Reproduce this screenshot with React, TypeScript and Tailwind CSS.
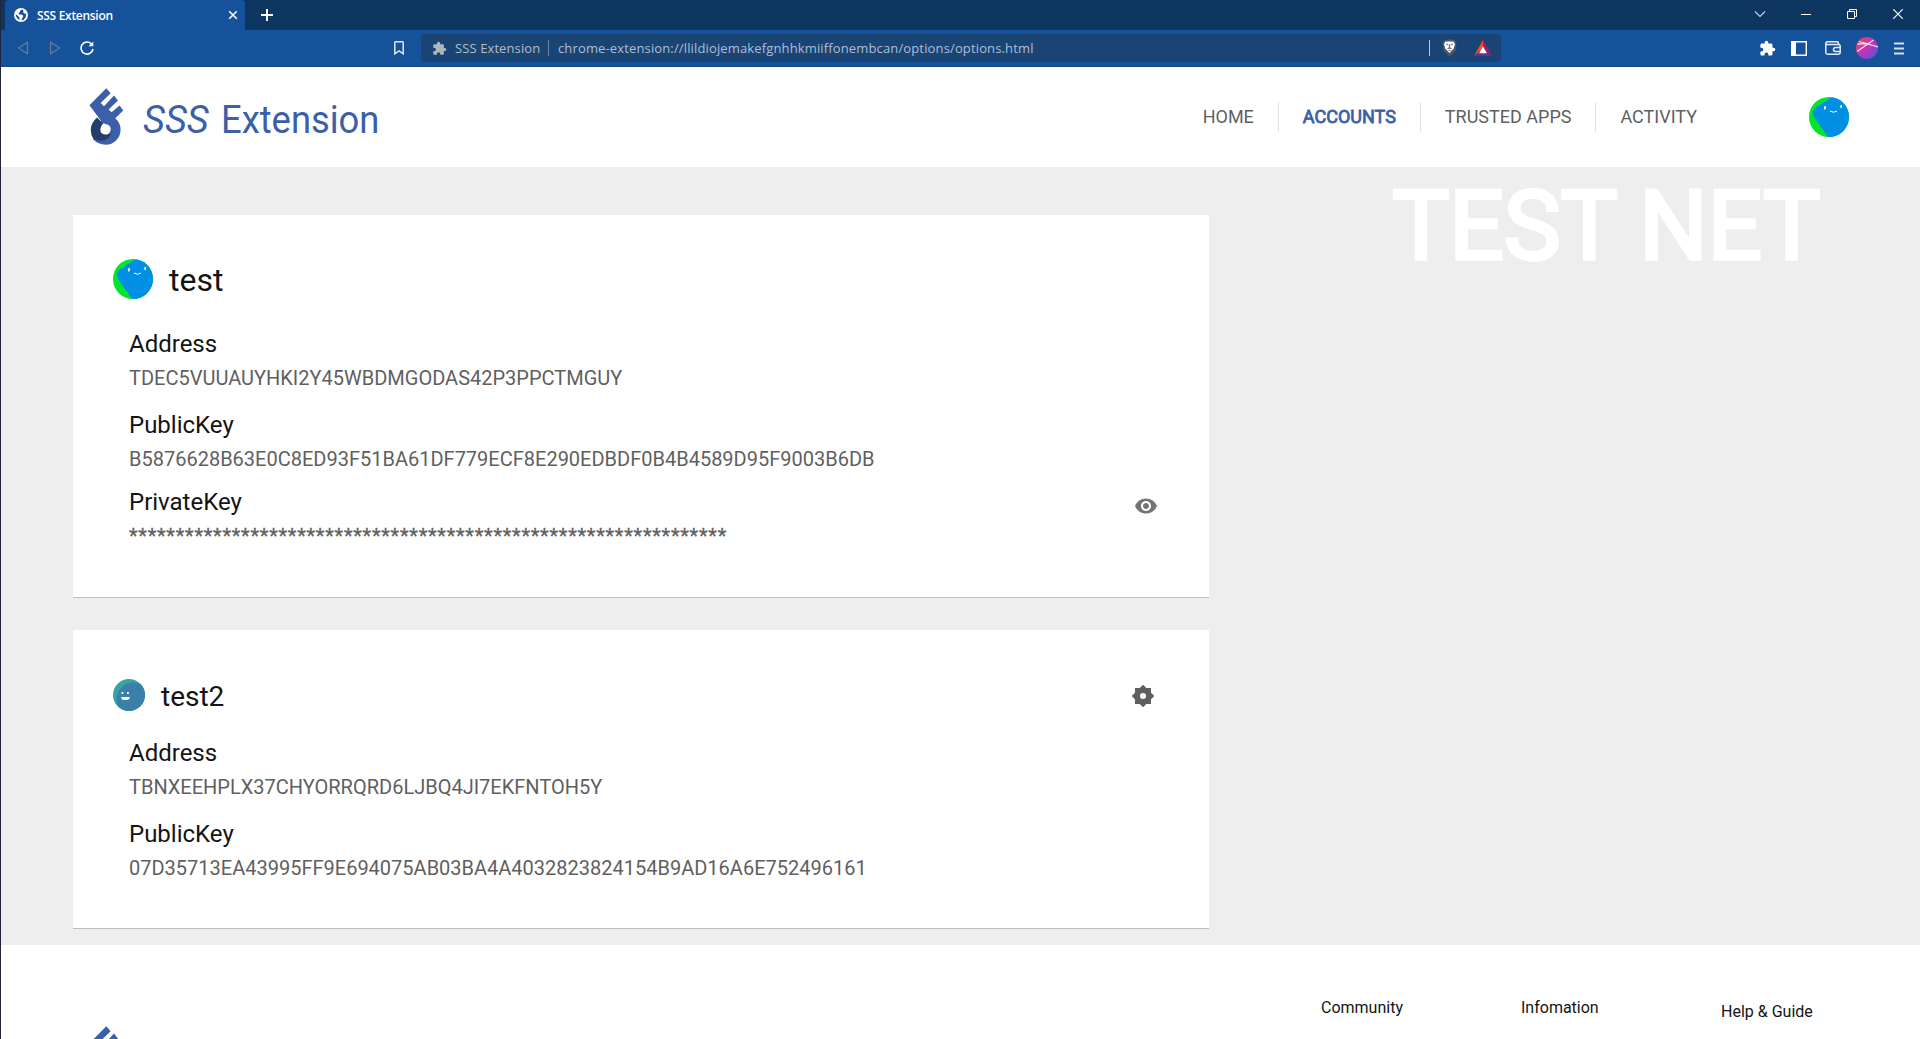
import React from "react";
import { MdExtension, MdVisibility } from "react-icons/md";

function SssMark({ className = "" }: { className?: string }) {
  return (
    <svg viewBox="268 263 105 172" className={`h-[57px] w-[35px] shrink-0 ${className}`}>
      <path
        fill="#3b5fa9"
        d="M269 315 L320 264 L333 279 L303 308 L313 318 L343 286 L355 301 L327 328 L336 336 L360 316 L371 331 L347 354 Q363 368 363 390 A45 45 0 0 1 318 434 Q295 434 280 418 L300 400 L304 362 Z"
      />
      <path
        fill="#263d6b"
        d="M292 352 Q273 368 273 390 Q273 406 281 417 Q290 423 303 422 Q326 421 335 400 L318 404 L302 390 Q302 378 311 371 Z"
      />
      <path d="M302 388 Q303 376 311 369 L322 373 A15.500 15.500 0 1 1 302 388 Z" fill="#fff" />
    </svg>
  );
}

function BlobAvatar() {
  return (
    <svg viewBox="0 0 40 40" className="size-10 shrink-0 rounded-full">
      <rect width="40" height="40" fill="#00e62f" />
      <path d="M23 0 L7 10 Q2 14 5 20 L19 40 H40 V0 Z" fill="#008fe3" />
      <path d="M15 9.2h2v2l-1 1.2h-1zM31 9l1-1h1v3h-1.4z" fill="#fff" />
      <path d="M21 14 Q24.500 16.500 28 14" fill="none" stroke="#fff" strokeWidth="1" />
    </svg>
  );
}

function SmileAvatar() {
  return (
    <svg viewBox="0 0 32 32" className="size-8 shrink-0 rounded-full">
      <rect width="32" height="32" fill="#38a3a5" />
      <circle cx="20.500" cy="20.500" r="17" fill="#3a80a9" />
      <path d="M8.500 13h1.800v2h-1.800zM14 13h1.800v2h-1.800zM8 18h9q-.5 3-3 3h-3q-2.500 0-3-3z" fill="#fff" />
    </svg>
  );
}

function TabStrip() {
  return (
    <div className="flex h-[30px] items-center bg-[#0c3560] pl-1 text-white">
      <div className="flex h-full w-[240px] items-center rounded-t-[4px] bg-[#155299] pr-[7px] pl-[9px]">
        <svg viewBox="0 0 14 14" className="size-[14px]">
          <circle cx="7" cy="7" r="7" fill="#fff" />
          <path
            fill="#155299"
            d="M8.200 1.500 Q5.500 2.200 6 4 L4.500 5 L5 6.500 L7.500 6.500 Q9.500 7 9.200 8.500 Q8 10 7.500 12.300 Q10 12.300 11.600 9.500 L12.300 6 L10.500 5.500 L9 4.500 L9.600 3 Z M1.600 6 L4.500 8.500 L5.500 10 L5.500 12 Q2 10.500 1.600 6Z"
          />
        </svg>
        <span className="ml-[9px] flex-1 pt-[2px] text-[12px] font-semibold tracking-[-0.3px]">SSS Extension</span>
        <svg viewBox="0 0 10 10" className="size-[10px]">
          <path d="M1.200 1.200 8.800 8.800M8.800 1.200 1.200 8.800" stroke="#fff" strokeWidth="1.500" />
        </svg>
      </div>
      <svg viewBox="0 0 12 12" className="ml-4 size-3">
        <path d="M6 0v12M0 6h12" stroke="#fff" strokeWidth="2" />
      </svg>
      <div className="ml-auto flex items-center pr-[17px] pb-[2px]">
        <svg viewBox="0 0 12 8" className="h-2 w-3">
          <path d="M1 1.500 6 6.500 11 1.500" fill="none" stroke="#c3cfdc" strokeWidth="1.200" />
        </svg>
        <svg viewBox="0 0 10 10" className="ml-[35px] size-[10px]">
          <path d="M0 5.500h10" stroke="#fff" />
        </svg>
        <svg viewBox="0 0 10 10" className="ml-[36px] size-[10px]">
          <path d="M.5 2.500h7v7h-7zM2.500 2.500v-2h7v7h-2" fill="none" stroke="#fff" />
        </svg>
        <svg viewBox="0 0 10 10" className="ml-[36px] size-[10px]">
          <path d="M.3.3 9.700 9.700M9.700.3.3 9.700" stroke="#fff" strokeWidth="1.200" />
        </svg>
      </div>
    </div>
  );
}

function Toolbar() {
  return (
    <div className="flex h-[37px] items-center border-b border-[#0f4a8c] bg-[#155299] pl-4">
      <svg viewBox="0 0 12 14" className="h-[14px] w-3">
        <path d="M10.500 1.200v11.600L1.500 7z" fill="none" stroke="#64789a" strokeWidth="1.400" strokeLinejoin="round" />
      </svg>
      <svg viewBox="0 0 12 14" className="ml-5 h-[14px] w-3">
        <path d="M1.500 1.200v11.600L10.500 7z" fill="none" stroke="#64789a" strokeWidth="1.400" strokeLinejoin="round" />
      </svg>
      <svg viewBox="0 0 14 14" className="ml-[19px] size-[14px]">
        <path d="M11.500 3A6 6 0 1 0 13 8" fill="none" stroke="#fff" strokeWidth="1.600" />
        <path d="M8.500 5.200h4.800V.6z" fill="#fff" />
      </svg>
      <svg viewBox="0 0 10 14" className="ml-[300px] h-[14px] w-[10px]">
        <path d="M.8 1.500Q.8.8 1.500.8h7q.7 0 .7.700v11.300L5 10 .8 12.800z" fill="none" stroke="#dfe8f3" strokeWidth="1.500" />
      </svg>
      <div className="ml-[17px] flex h-7 w-[1080px] items-center rounded-[4px] bg-[#194474] text-[13px]">
        <MdExtension className="ml-[11px] size-[15px] text-[#b0b6bd]" />
        <span className="ml-2 w-[86px] pt-[2px] tracking-[0.1px] whitespace-nowrap text-[#b3bcc7]">SSS Extension</span>
        <span className="ml-[7px] h-4 w-px bg-[#6d86a3]" />
        <span className="ml-[9px] pt-[2px] tracking-[0.14px] text-[#a9bfd8]">
          chrome-extension://llildiojemakefgnhhkmiiffonembcan/options/options.html
        </span>
        <span className="ml-auto h-4 w-px bg-[#c0c6cc]" />
        <svg viewBox="0 0 15 18" className="ml-3 h-[18px] w-[15px]">
          <path d="M2.500 1 7.500.3 12.500 1 14.500 4 13.500 12 7.500 17.500 1.500 12 .5 4z" fill="#50546a" />
          <path d="M3.500 2.600h8L13 5l-1.300 4.500L7.500 14 3.300 9.500 2 5z" fill="#fff" />
          <path d="M4 5l2.500 1M11 5 8.500 6M7.500 5.500v3.200M5.500 9.500l2-.8 2 .8M6.500 11.500h2" stroke="#50546a" strokeWidth=".9" />
        </svg>
        <svg viewBox="0 0 17 15" className="mr-[9px] ml-[17px] h-4 w-[18px]">
          <path d="M8.500 0 0 15 8.500 9z" fill="#ff4724" />
          <path d="M8.500 0 17 15 8.500 9z" fill="#9e1f63" />
          <path d="M0 15h17L8.500 8z" fill="#662d91" />
          <path d="M8.500 6 4.800 12.500h7.400z" fill="#fff" />
        </svg>
      </div>
      <div className="ml-auto flex items-center pr-4">
        <MdExtension className="size-[17px] text-white" />
        <svg viewBox="0 0 16 15" className="ml-[15px] h-[15px] w-4">
          <path d="M.7.700h14.600v13.600H.7z" fill="none" stroke="#fff" strokeWidth="1.400" />
          <path d="M0 0h5v15H0z" fill="#fff" />
        </svg>
        <svg viewBox="0 0 16 14" className="ml-[18px] h-[14px] w-4">
          <path
            d="M13.500 3.500V2.200Q13.500.8 12 .8H2.500Q.8.8.8 2.500v9q0 1.700 1.700 1.700h11q1.700 0 1.700-1.700V5.200q0-1.700-1.700-1.700H1M15 6.500h-4.500a2 2 0 0 0 0 4H15"
            fill="none"
            stroke="#e4ecf5"
            strokeWidth="1.500"
          />
        </svg>
        <svg viewBox="0 0 22 22" className="ml-[15px] size-[22px]">
          <defs>
            <linearGradient id="profile" x1="0" y1="0" x2="1" y2="1">
              <stop offset="0" stopColor="#f0445a" />
              <stop offset=".5" stopColor="#c035b5" />
              <stop offset="1" stopColor="#3a5be0" />
            </linearGradient>
          </defs>
          <circle cx="11" cy="11" r="11" fill="url(#profile)" />
          <path d="M1 14.500 17.500 3M3 4.500 22 10M1.500 7 12 6.500" stroke="#fbd9ee" strokeWidth="1.300" fill="none" />
        </svg>
        <svg viewBox="0 0 10 13" className="ml-4 h-[13px] w-[10px]">
          <path d="M0 1.500h10M0 6.500h10M0 11.500h10" stroke="#d5e0ee" strokeWidth="1.800" />
        </svg>
      </div>
    </div>
  );
}

function Header() {
  return (
    <header className="flex h-[100px] items-center bg-white pr-[71px] pl-[88px]">
      <SssMark className="mb-[2px]" />
      <div className="mt-[6px] ml-[19px] flex items-baseline text-[38px] leading-[44px] text-[#3b5fa9]">
        <span className="italic">SSS</span>
        <span className="ml-3 origin-left scale-x-[0.957]">Extension</span>
      </div>
      <nav className="ml-auto flex h-[30px] items-center text-[18px] leading-[30px] text-[#5f5f5f]">
        <a className="border-r border-[#e0e0e0] px-6">HOME</a>
        <a className="border-r border-[#e0e0e0] px-6 text-[#3b5fa9] [-webkit-text-stroke:0.8px_#3b5fa9]">ACCOUNTS</a>
        <a className="border-r border-[#e0e0e0] px-6">TRUSTED APPS</a>
        <a className="px-6">ACTIVITY</a>
      </nav>
      <div className="ml-[88px]">
        <BlobAvatar />
      </div>
    </header>
  );
}

function Field({
  label,
  value,
  className = "",
  valueClass = "",
}: {
  label: string;
  value: string;
  className?: string;
  valueClass?: string;
}) {
  return (
    <div className={`pl-4 ${className}`}>
      <div className="text-[24px] leading-8 text-[#141414]">{label}</div>
      <div className={`mt-[3px] pb-px text-[20px] leading-[30px] text-[#5f5f5f] ${valueClass}`}>{value}</div>
    </div>
  );
}

function Accounts() {
  return (
    <main className="flex h-[778px] items-start justify-between bg-[#eeeeee] pr-[100px] pl-[72px]">
      <div className="mt-12 w-[1136px]">
        <section className="h-[383px] border-b border-[#bdbfbf] bg-white px-10 pt-11">
          <div className="flex h-10 items-center gap-4">
            <BlobAvatar />
            <h2 className="mt-[2px] text-[32px] leading-10 text-[#141414]">test</h2>
          </div>
          <Field className="mt-[29px]" label="Address" value="TDEC5VUUAUYHKI2Y45WBDMGODAS42P3PPCTMGUY" />
          <Field
            className="mt-[15px]"
            label="PublicKey"
            value="B5876628B63E0C8ED93F51BA61DF779ECF8E290EDBDF0B4B4589D95F9003B6DB"
          />
          <div className="mt-[11px] flex items-start justify-between pr-[11px]">
            <Field
              label="PrivateKey"
              value={"*".repeat(64)}
              valueClass="tracking-[0.73px] [-webkit-text-stroke:0.3px_#5f5f5f]"
            />
            <MdVisibility className="mt-2 size-6 text-[#757575]" />
          </div>
        </section>
        <section className="mt-8 h-[299px] border-b border-[#bdbdbd] bg-white px-10 pt-[49px]">
          <div className="flex h-8 items-center">
            <SmileAvatar />
            <h2 className="mt-1 ml-4 text-[28px] leading-8 text-[#141414]">test2</h2>
            <svg viewBox="0 0 24 24" className="mt-[2px] mr-[14px] ml-auto size-6">
              <path
                fill="#5f5f5f"
                fillRule="evenodd"
                d="M20 15.310 23.310 12 20 8.690V4h-4.690L12 .69 8.690 4H4v4.690L.69 12 4 15.310V20h4.690L12 23.310 15.310 20H20zM12 15a3 3 0 1 1 0-6 3 3 0 0 1 0 6z"
              />
            </svg>
          </div>
          <Field className="mt-[26px]" label="Address" value="TBNXEEHPLX37CHYORRQRD6LJBQ4JI7EKFNTOH5Y" />
          <Field
            className="mt-[15px]"
            label="PublicKey"
            value="07D35713EA43995FF9E694075AB03BA4A4032823824154B9AD16A6E752496161"
          />
        </section>
      </div>
      <div className="text-[96px] leading-[118px] tracking-[-0.2px] whitespace-nowrap text-white [-webkit-text-stroke:3.5px_white]">
        TEST NET
      </div>
    </main>
  );
}

function Footer() {
  return (
    <footer className="flex h-[94px] items-start overflow-hidden bg-white pl-[88px]">
      <SssMark className="mt-[81px]" />
      <div className="ml-auto flex w-[599px] pt-[51px] text-[16px] leading-6 text-[#141414]">
        <span className="w-[200px]">Community</span>
        <span className="w-[200px]">Infomation</span>
        <span className="mt-1">Help &amp; Guide</span>
      </div>
    </footer>
  );
}

export default function App() {
  return (
    <div className="h-[1039px] w-[1920px] overflow-hidden border-l border-[#23233a] bg-white font-['Roboto',sans-serif]">
      <div className="font-['Open_Sans','Noto_Sans',sans-serif]">
        <TabStrip />
        <Toolbar />
      </div>
      <Header />
      <Accounts />
      <Footer />
    </div>
  );
}
